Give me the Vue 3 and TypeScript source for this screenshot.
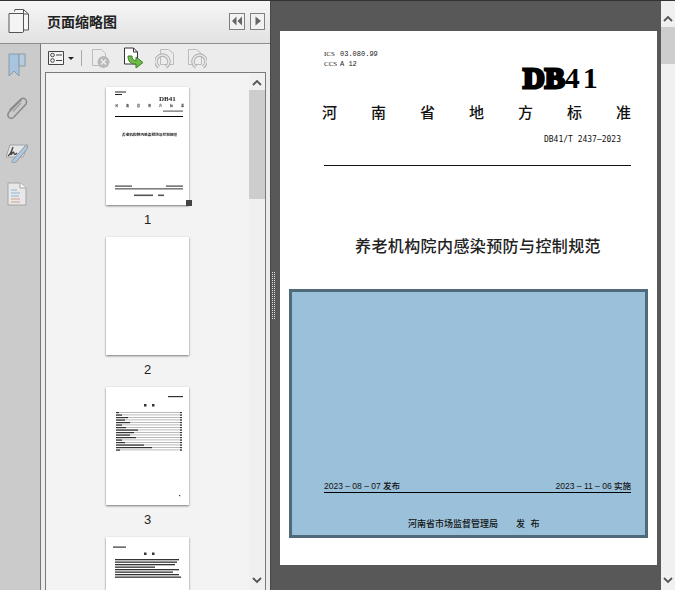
<template>
  <div class="app">
    <!-- thumbnails panel -->
    <div class="side">
      <div class="side-head">
        <svg class="head-icon" width="21" height="24" viewBox="0 0 21 24">
          <path d="M6.500 2.500 7 .5h8.500l5 4.500v16h-5" fill="#f6f6f6" stroke="#555" />
          <path d="M15.500.5v4.500h5" fill="none" stroke="#555" />
          <path d="M1 4.500h14.500v18.500l-1 .5H1z" fill="#f4f4f4" stroke="#555" />
        </svg>
        <div class="head-title">页面缩略图</div>
        <div class="head-btn">
          <svg width="14" height="14" viewBox="0 0 14 14"><path d="M6.500 2.500v9L2 7zM12 2.500v9L7.500 7z" fill="#666" /></svg>
        </div>
        <div class="head-btn narrow">
          <svg width="12" height="14" viewBox="0 0 12 14"><path d="M3.500 2.500v9L9 7z" fill="#666" /></svg>
        </div>
      </div>
      <div class="side-body">
        <div class="rail">
          <svg width="18" height="24" viewBox="0 0 18 24">
            <path d="M1 1h10v22l-5-5-5 5z" fill="#a8c5df" stroke="#8c99a4" />
            <path d="M11 1h6v12h-6z" fill="#b5cde2" stroke="#8c99a4" />
          </svg>
          <svg width="22" height="24" viewBox="0 0 22 24">
            <path d="M16 3 3 16c-3 4 1 8 4.500 5.500L20 8c2-4-2-7-5-5L3.500 14" fill="none" stroke="#8a8a8a" stroke-width="1.500" />
            <path d="M15 7 7 15.500" fill="none" stroke="#a0a0a0" stroke-width="1.300" />
          </svg>
          <svg class="sign" width="24" height="20" viewBox="0 0 24 20">
            <path d="M5 2h18l-5 12H1z" fill="#e6e6e6" stroke="#a2a2a2" />
            <path d="M3 13c3-2 4-6 5-9-1 3-2 6-2 8 1-2 3-4 3-2s1 2 3 0" fill="none" stroke="#444" stroke-width="1.300" />
            <path d="m7 18 13-15c2-1 3 1 2 3L11 19c-2 1-5 1-4-1z" fill="#aec9e0" stroke="#8e9ba6" />
          </svg>
          <svg class="doc" width="20" height="24" viewBox="0 0 20 24">
            <path d="M1 1h12l6 5v17H1z" fill="#e8e8e8" stroke="#a5a5a5" />
            <path d="M13 1v5h6" fill="#f6f6f6" stroke="#a5a5a5" />
            <path d="M4 8h6M4 11h9M4 14h8" stroke="#8fb2cf" stroke-width="1.200" />
            <path d="M4 17h9M4 20h9" stroke="#cc9f8e" stroke-width="1.200" />
          </svg>
        </div>
        <div class="panel">
          <div class="toolbar">
            <svg width="16" height="16" viewBox="0 0 16 16">
              <path d="M.5 1.500h15v13H.5z" fill="#f3f3f3" stroke="#444" />
              <circle cx="4.500" cy="5" r="1.800" fill="none" stroke="#444" />
              <circle cx="4.500" cy="10.500" r="1.800" fill="none" stroke="#444" />
              <path d="M8 5h6M8 10.500h6" stroke="#444" stroke-width="1.200" />
            </svg>
            <span class="caret"></span>
            <span class="sep"></span>
            <svg class="tool-x" width="20" height="21" viewBox="0 0 20 21">
              <path d="M1.500 1.500h9l4 4v12h-13z" fill="#ececec" stroke="#bcbcbc" />
              <circle cx="12.500" cy="14" r="6" fill="#b9b9b9" />
              <path d="m10 11.500 5 5m0-5-5 5" stroke="#eee" stroke-width="1.400" />
            </svg>
            <svg class="tool-go" width="22" height="22" viewBox="0 0 22 22">
              <path d="M1.500 1h9l4 4v12h-13z" fill="#fff" stroke="#333" />
              <path d="M10.500 1v4h4" fill="none" stroke="#333" />
              <path d="M5 9c0 6 3 8 8 8v4l7-5.500L13 10v3.500c-3 0-4-2-4-4.500z" fill="#6fbb4a" stroke="#3f7f2d" />
            </svg>
            <svg class="tool-r" width="20" height="21" viewBox="0 0 20 21">
              <path d="M5.500 1.500h8l5 4v11h-13z" fill="#ececec" stroke="#bcbcbc" />
              <path d="M4 19a6.500 6.500 0 1 1 7 0" fill="none" stroke="#adadad" stroke-width="3.400" />
              <path d="M4 19a6.500 6.500 0 1 1 7 0" fill="none" stroke="#e8e8e8" stroke-width="1.600" />
            </svg>
            <svg class="tool-l" width="20" height="21" viewBox="0 0 20 21">
              <path d="M1.500 1.500h8l5 4v11h-13z" fill="#ececec" stroke="#bcbcbc" />
              <path d="M9 19a6.500 6.500 0 1 1 7 0" fill="none" stroke="#adadad" stroke-width="3.400" />
              <path d="M9 19a6.500 6.500 0 1 1 7 0" fill="none" stroke="#e8e8e8" stroke-width="1.600" />
            </svg>
          </div>
          <div class="list-wrap">
            <div class="list">
              <div class="thumb-item">
                <div class="thumb selected">
                  <svg class="mini" width="83" height="118" viewBox="0 0 83 118">
                    <g fill="#222">
                      <rect x="9" y="4.500" width="11" height="1" />
                      <rect x="9" y="7" width="7" height="1" />
                      <text x="53" y="13.500" class="mini-db">DB41</text>
                      <text
                        v-for="(c, i) in province"
                        :key="c"
                        :x="9 + i * 11"
                        y="20"
                        class="mini-zh"
                      >{{ c }}</text>
                      <rect x="57" y="23.500" width="20" height="1.200" fill="#666" />
                      <rect x="9" y="29" width="68" height="1" fill="#000" />
                      <text x="16" y="48.500" class="mini-title">养老机构院内感染预防与控制规范</text>
                      <rect x="9" y="98.500" width="17" height="1.200" fill="#444" />
                      <rect x="60" y="98.500" width="17" height="1.200" fill="#444" />
                      <rect x="9" y="101.500" width="68" height=".8" fill="#000" />
                      <rect x="28" y="107.500" width="19" height="1.600" fill="#555" />
                      <rect x="52" y="107.500" width="6" height="1.600" fill="#555" />
                    </g>
                  </svg>
                  <span class="corner"></span>
                </div>
                <div class="thumb-no">1</div>
              </div>
              <div class="thumb-item">
                <div class="thumb"></div>
                <div class="thumb-no">2</div>
              </div>
              <div class="thumb-item">
                <div class="thumb">
                  <svg class="mini" width="83" height="118" viewBox="0 0 83 118">
                    <rect x="62" y="9" width="15" height="1.200" fill="#333" />
                    <rect x="38" y="17" width="2.500" height="2.500" fill="#333" />
                    <rect x="46" y="17" width="2.500" height="2.500" fill="#333" />
                    <g v-for="(w, i) in tocRows" :key="i">
                      <rect x="10" :y="25 + i * 2.500" width="66" height=".8" fill="#aaa" />
                      <rect x="10" :y="25 + i * 2.500" :width="w" height="1.200" fill="#333" />
                      <rect x="74" :y="25 + i * 2.500" width="2" height="1.200" fill="#333" />
                    </g>
                    <rect x="73" y="108" width="1.200" height="1.200" fill="#333" />
                  </svg>
                </div>
                <div class="thumb-no">3</div>
              </div>
              <div class="thumb-item">
                <div class="thumb">
                  <svg class="mini" width="83" height="118" viewBox="0 0 83 118">
                    <rect x="7" y="9.500" width="13" height="1.200" fill="#333" />
                    <rect x="38" y="15.500" width="2.500" height="2.500" fill="#333" />
                    <rect x="46" y="15.500" width="2.500" height="2.500" fill="#333" />
                    <rect
                      v-for="(w, i) in forewordRows"
                      :key="i"
                      x="9"
                      :y="22 + i * 2.500"
                      :width="w"
                      height="1.300"
                      fill="#333"
                    />
                  </svg>
                </div>
              </div>
            </div>
            <div class="list-scroll">
              <svg width="16" height="17" viewBox="0 0 16 17"><path d="m4 12 4-4 4 4" fill="none" stroke="#555" stroke-width="1.800" /></svg>
              <div class="list-thumb"></div>
              <div class="scroll-gap"></div>
              <svg width="16" height="18" viewBox="0 0 16 18"><path d="m4 6 4 4 4-4" fill="none" stroke="#555" stroke-width="1.800" /></svg>
            </div>
          </div>
        </div>
      </div>
    </div>

    <!-- document view -->
    <div class="view">
      <div class="grip"><i v-for="n in 48" :key="n"></i></div>
      <div class="sheet">
        <div class="sheet-top">
          <div class="ics">
            <div><span class="ics-key">ICS</span>03.080.99</div>
            <div><span class="ics-key">CCS</span>A 12</div>
          </div>
          <div class="db"><b>DB</b>41</div>
          <div class="province">
            <span v-for="c in province" :key="c">{{ c }}</span>
          </div>
          <div class="code">DB41/T 2437—2023</div>
          <div class="rule"></div>
          <div class="title">养老机构院内感染预防与控制规范</div>
        </div>
        <div class="cover">
          <div class="dates">
            <span>2023 – 08 – 07 发布</span>
            <span>2023 – 11 – 06 实施</span>
          </div>
          <div class="issuer">河南省市场监督管理局<span>发 布</span></div>
        </div>
      </div>
    </div>

    <div class="view-scroll">
      <svg width="14" height="26" viewBox="0 0 14 26"><path d="m3 20 4-4 4 4" fill="none" stroke="#555" stroke-width="1.800" /></svg>
      <div class="view-thumb"></div>
      <div class="scroll-gap"></div>
      <svg width="14" height="18" viewBox="0 0 14 18"><path d="m3 6 4 4 4-4" fill="none" stroke="#555" stroke-width="1.800" /></svg>
    </div>
  </div>
</template>

<script setup lang="ts">
const province: string[] = ['河', '南', '省', '地', '方', '标', '准']
const tocRows: number[] = [3, 6, 12, 9, 14, 6, 10, 22, 18, 14, 20, 6, 9, 28, 36, 4]
const forewordRows: number[] = [64, 62, 60, 40, 64, 58, 64, 66]
</script>

<style>
html,
body {
  margin: 0;
  overflow: hidden;
}
</style>

<style scoped>
.app {
  width: 675px;
  height: 590px;
  display: flex;
  overflow: hidden;
  font-family: "Liberation Sans", "Noto Sans CJK SC", sans-serif;
  background: #585858;
}

.side {
  width: 270px;
  height: 590px;
  flex: none;
  display: flex;
  flex-direction: column;
  background: #ececec;
}

.side-head {
  height: 44px;
  flex: none;
  box-sizing: border-box;
  border-top: 1px solid #333;
  border-bottom: 1px solid #8e8e8e;
  background: linear-gradient(#f6f6f6, #e2e2e2);
  display: flex;
  align-items: center;
  padding: 0 5px 2px 8px;
}

.head-icon {
  flex: none;
}

.head-title {
  margin-left: 18px;
  width: 182px;
  font-size: 14px;
  font-weight: 700;
  color: #222;
}

.head-btn {
  width: 16px;
  height: 17px;
  box-sizing: border-box;
  border: 1px solid #808080;
  background: #f2f2f2;
  display: flex;
  align-items: center;
  justify-content: center;
  margin-right: 5px;
}

.head-btn.narrow {
  width: 15px;
  margin-right: 0;
}

.side-body {
  flex: 1;
  min-height: 0;
  display: flex;
}

.rail {
  width: 41px;
  flex: none;
  box-sizing: border-box;
  background: #cbcbcb;
  border-right: 1px solid #777;
  display: flex;
  flex-direction: column;
  align-items: center;
  gap: 19px;
  padding: 9px 6px 0 0;
}

.rail svg {
  flex: none;
}

.rail .sign {
  margin-top: 4px;
}

.panel {
  flex: 1;
  min-width: 0;
  display: flex;
  flex-direction: column;
}

.toolbar {
  height: 28px;
  flex: none;
  display: flex;
  align-items: center;
  padding-left: 7px;
}

.caret {
  width: 0;
  height: 0;
  margin-left: 4px;
  border: 3px solid transparent;
  border-top: 3px solid #222;
  border-bottom: 0;
}

.sep {
  width: 1px;
  height: 16px;
  margin: 0 9px 0 7px;
  background: #aaa;
}

.tool-go {
  margin-left: 12px;
}

.tool-r {
  margin-left: 10px;
}

.tool-l {
  margin-left: 12px;
}

.list-wrap {
  flex: 1;
  min-height: 0;
  margin: 0 4px;
  box-sizing: border-box;
  border: 1px solid #7a7a7a;
  border-bottom: 0;
  display: flex;
  background: #f3f3f3;
}

.list {
  flex: 1;
  overflow: hidden;
  display: flex;
  flex-direction: column;
  align-items: center;
  padding-top: 14px;
}

.thumb-item {
  display: flex;
  flex-direction: column;
  align-items: center;
  flex: none;
}

.thumb {
  position: relative;
  width: 83px;
  height: 118px;
  background: #fff;
  box-shadow: 0 1px 2px #777;
}

.thumb svg {
  display: block;
}

.mini {
  filter: blur(.3px);
}

.mini-db {
  font-family: "Liberation Serif", serif;
  font-size: 7px;
  font-weight: 700;
}

.mini-zh {
  font-size: 3px;
  font-weight: 700;
}

.mini-title {
  font-size: 3.700px;
  font-weight: 700;
}

.corner {
  position: absolute;
  right: -3px;
  bottom: -1px;
  width: 6px;
  height: 6px;
  background: #444;
}

.thumb-no {
  height: 32px;
  padding-top: 7px;
  box-sizing: border-box;
  font-size: 13px;
  line-height: 15px;
  color: #222;
}

.list-scroll {
  width: 16px;
  flex: none;
  display: flex;
  flex-direction: column;
  background: #f0f0f0;
}

.list-thumb {
  height: 109px;
  background: #cdcdcd;
}

.scroll-gap {
  flex: 1;
}

.view {
  width: 391px;
  flex: none;
  display: flex;
  position: relative;
  background: #585858;
  border-top: 1px solid #333;
  border-left: 1px solid #484848;
  box-sizing: border-box;
  padding: 30px 0 0 9px;
}

.grip {
  position: absolute;
  left: 1px;
  top: 271px;
  display: grid;
  grid-template-columns: 1px 1px;
  gap: 1px;
}

.grip i {
  width: 1px;
  height: 1px;
  background: #ddd;
}

.sheet {
  width: 377px;
  height: 534px;
  background: #fff;
  display: flex;
  flex-direction: column;
}

.sheet-top {
  height: 259px;
  flex: none;
  box-sizing: border-box;
  padding: 18px 26px 0 44px;
}

.ics {
  font-family: "Liberation Mono", monospace;
  font-size: 7px;
  line-height: 10px;
  color: #222;
}

.ics-key {
  font-family: "Liberation Serif", serif;
  display: inline-block;
  width: 16px;
}

.db {
  margin: -3px 0 0 199px;
  height: 24px;
  font-family: "Liberation Serif", serif;
  font-size: 30px;
  line-height: 24px;
  font-weight: 700;
  letter-spacing: 3px;
  white-space: nowrap;
  color: #000;
}

.db b {
  -webkit-text-stroke: 3px #000;
  letter-spacing: 0;
}

.province {
  display: flex;
  justify-content: space-between;
  margin-top: 12px;
  margin-left: -2px;
  font-size: 15px;
  font-weight: 500;
  line-height: 22px;
  color: #111;
}

.code {
  margin-top: 10px;
  text-align: right;
  padding-right: 10px;
  font-family: "DejaVu Sans Mono", monospace;
  font-size: 8px;
  line-height: 12px;
  color: #111;
}

.rule {
  height: 1px;
  margin-top: 19px;
  background: #111;
}

.title {
  margin-top: 69px;
  margin-left: 31px;
  font-size: 16px;
  font-weight: 500;
  line-height: 24px;
  letter-spacing: .4px;
  white-space: nowrap;
  color: #222;
}

.cover {
  width: 359px;
  height: 249px;
  flex: none;
  box-sizing: border-box;
  margin-top: -1px;
  margin-left: 9px;
  border: 3px solid #4f6a7b;
  background: #9bc0da;
  padding: 188px 14px 0 32px;
  font-size: 8.500px;
  font-weight: 500;
  color: #111;
}

.dates {
  display: flex;
  justify-content: space-between;
  line-height: 12px;
  border-bottom: 1px solid #000;
}

.issuer {
  margin-top: 25px;
  padding-left: 84px;
  font-size: 9px;
  line-height: 12px;
}

.issuer span {
  margin-left: 18px;
  word-spacing: 3px;
}

.view-scroll {
  width: 14px;
  flex: none;
  box-sizing: border-box;
  display: flex;
  flex-direction: column;
  align-items: stretch;
  background: #f0f0f0;
  border-top: 1px solid #333;
}

.view-thumb {
  height: 37px;
  background: #cdcdcd;
}
</style>
